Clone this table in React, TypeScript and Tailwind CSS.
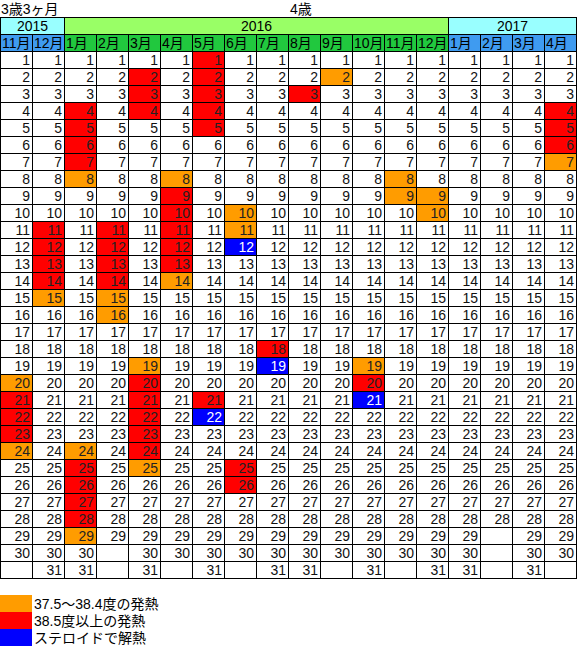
import React from "react";

type Mark = "o" | "r" | "b";

type Month = {
  label: string;
  days: number;
  blue: boolean;
  marks: Record<number, Mark>;
};

const months: Month[] = [
  { label: "11月", days: 30, blue: true, marks: { 20: "o", 21: "r", 22: "r", 23: "r", 24: "o" } },
  { label: "12月", days: 31, blue: true, marks: { 11: "r", 12: "r", 13: "r", 14: "r", 15: "o" } },
  {
    label: "1月",
    days: 31,
    blue: false,
    marks: { 4: "r", 5: "r", 6: "r", 7: "r", 8: "o", 24: "o", 25: "r", 26: "r", 27: "r", 28: "r", 29: "o" },
  },
  { label: "2月", days: 29, blue: false, marks: { 11: "r", 12: "r", 13: "r", 14: "r", 15: "o", 16: "o" } },
  {
    label: "3月",
    days: 31,
    blue: false,
    marks: { 2: "r", 3: "r", 4: "r", 19: "o", 20: "r", 21: "r", 22: "r", 23: "r", 24: "r", 25: "o" },
  },
  { label: "4月", days: 30, blue: false, marks: { 8: "o", 9: "r", 10: "r", 11: "r", 12: "r", 13: "r", 14: "o" } },
  { label: "5月", days: 31, blue: false, marks: { 1: "r", 2: "r", 3: "r", 4: "r", 5: "r", 21: "r", 22: "b" } },
  { label: "6月", days: 30, blue: false, marks: { 10: "o", 11: "o", 12: "b", 25: "r", 26: "r" } },
  { label: "7月", days: 31, blue: false, marks: { 18: "r", 19: "b" } },
  { label: "8月", days: 31, blue: false, marks: { 3: "r" } },
  { label: "9月", days: 30, blue: false, marks: { 2: "o" } },
  { label: "10月", days: 31, blue: false, marks: { 19: "o", 20: "r", 21: "b" } },
  { label: "11月", days: 30, blue: false, marks: { 8: "o", 9: "o" } },
  { label: "12月", days: 31, blue: false, marks: { 9: "o", 10: "o" } },
  { label: "1月", days: 31, blue: true, marks: {} },
  { label: "2月", days: 28, blue: true, marks: {} },
  { label: "3月", days: 31, blue: true, marks: {} },
  { label: "4月", days: 30, blue: true, marks: { 4: "r", 5: "r", 6: "r", 7: "o" } },
];

const markClass: Record<Mark, string> = {
  o: "bg-[#ff9c00] text-[#222]",
  r: "bg-[#ff0000] text-[#222]",
  b: "bg-[#0000ff] text-white",
};

const days = Array.from({ length: 31 }, (_, i) => i + 1);

export default function App() {
  return (
    <div
      className="min-h-screen bg-white text-[14px] leading-[16px] text-black"
      style={{ fontFamily: '"Liberation Sans", "Noto Sans CJK JP", sans-serif' }}
    >
      {/* title row */}
      <div className="flex h-[17px] items-center">
        <span className="w-[290px] pl-px">3歳3ヶ月</span>
        <span>4歳</span>
      </div>

      <div className="grid w-[577px] grid-cols-[repeat(18,31px)] gap-px border border-black bg-black">
        <div className="col-span-2 h-[16px] bg-[#99ffff] text-center">2015</div>
        <div className="col-span-12 h-[16px] bg-[#99ff66] text-center">2016</div>
        <div className="col-span-4 h-[16px] bg-[#99ffff] text-center">2017</div>

        {months.map((m, i) => (
          <div
            key={"h" + i}
            className={
              "h-[16px] pl-px " + (m.blue ? "bg-[#3f9bf0]" : "bg-[#21c83e]")
            }
          >
            {m.label}
          </div>
        ))}

        {days.map((d) =>
          months.map((m, i) => {
            const mark = m.marks[d];
            return (
              <div
                key={d + "-" + i}
                className={
                  "h-[16px] pr-[2px] text-right " +
                  (mark ? markClass[mark] : "bg-white text-[#111]")
                }
              >
                {d <= m.days ? d : ""}
              </div>
            );
          })
        )}
      </div>

      {/* legend */}
      <div className="mt-[16px] flex flex-col">
        <div className="flex h-[17px] items-center">
          <span className="h-full w-[32px] bg-[#ff9c00]" />
          <span className="pl-[2px]">37.5～38.4度の発熱</span>
        </div>
        <div className="flex h-[17px] items-center">
          <span className="h-full w-[32px] bg-[#ff0000]" />
          <span className="pl-[2px]">38.5度以上の発熱</span>
        </div>
        <div className="flex h-[17px] items-center">
          <span className="h-full w-[32px] bg-[#0000ff]" />
          <span className="pl-[2px]">ステロイドで解熱</span>
        </div>
      </div>
    </div>
  );
}
